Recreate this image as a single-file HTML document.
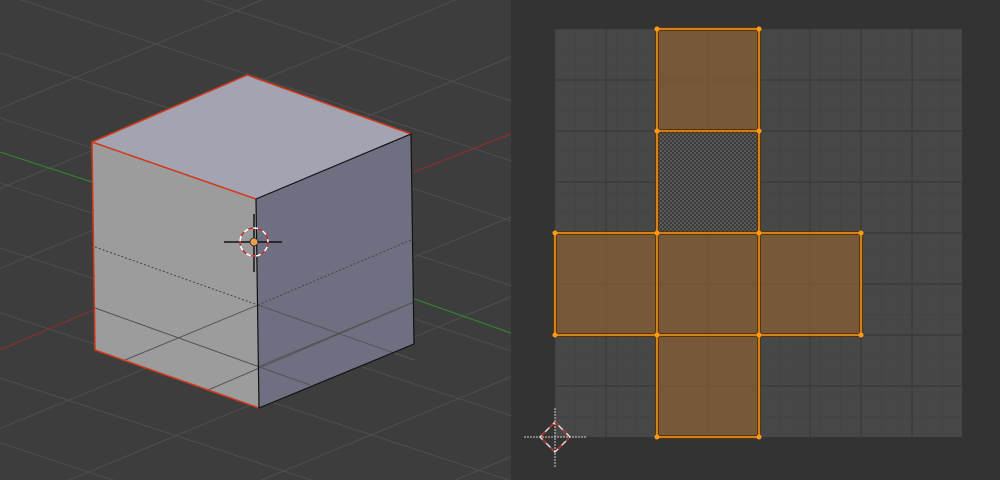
<!DOCTYPE html>
<html><head><style>
html,body{margin:0;padding:0;background:#3c3c3c;width:1000px;height:480px;overflow:hidden}
svg{display:block}
</style></head><body>
<svg width="1000" height="480" viewBox="0 0 1000 480" xmlns="http://www.w3.org/2000/svg">
<defs>
<pattern id="chk" width="4" height="4" patternUnits="userSpaceOnUse">
<rect width="4" height="4" fill="#5a5a5a"/><rect width="2" height="2" fill="#3a3a3a"/><rect x="2" y="2" width="2" height="2" fill="#3a3a3a"/>
</pattern>
<pattern id="fine" width="20.4" height="20.4" patternUnits="userSpaceOnUse" x="555" y="29">
<path d="M0 0V20.4M0 0H20.4" stroke="#3e3e3e" stroke-width="0.8" fill="none"/>
</pattern>
<clipPath id="lc"><rect x="0" y="0" width="511" height="480"/></clipPath>
</defs>
<rect x="0" y="0" width="511" height="480" fill="#3d3d3d"/>
<g clip-path="url(#lc)" stroke="#4e4e4e" stroke-width="1">
<line x1="-100" y1="20" x2="600" y2="250"/>
<line x1="-100" y1="-40" x2="600" y2="190"/>
<line x1="-100" y1="-100" x2="600" y2="130"/>
<line x1="-100" y1="85" x2="600" y2="315"/>
<line x1="-100" y1="150" x2="600" y2="380"/>
<line x1="-100" y1="215" x2="600" y2="445"/>
<line x1="-100" y1="280" x2="600" y2="510"/>
<line x1="-100" y1="345" x2="600" y2="575"/>
<line x1="-100" y1="410" x2="600" y2="640"/>
<line x1="-100" y1="475" x2="600" y2="705"/>
<line x1="-100" y1="150" x2="600" y2="-140"/>
<line x1="-100" y1="230" x2="600" y2="-60"/>
<line x1="-100" y1="310" x2="600" y2="20"/>
<line x1="-100" y1="470" x2="600" y2="180"/>
<line x1="-100" y1="550" x2="600" y2="260"/>
<line x1="-100" y1="630" x2="600" y2="340"/>
<line x1="-100" y1="710" x2="600" y2="420"/>
<line x1="-100" y1="790" x2="600" y2="500"/>
<line x1="-100" y1="870" x2="600" y2="580"/>
</g>
<line x1="0" y1="152" x2="92" y2="182" stroke="#2f8a2f" stroke-width="1"/>
<line x1="338" y1="272" x2="511" y2="333" stroke="#2f8a2f" stroke-width="1"/>
<line x1="0" y1="350" x2="175" y2="275" stroke="#9a2a2a" stroke-width="1"/>
<line x1="414" y1="172" x2="511" y2="134" stroke="#9a2a2a" stroke-width="1"/>
<polygon points="247,75 411,134 256,199 92,142" fill="#a3a3b2"/>
<polygon points="92,142 256,199 259,408 95,350" fill="#9c9c9c"/>
<polygon points="256,199 411,134 414,344 259,408" fill="#6f6f82"/>
<g stroke="#555" stroke-width="1" fill="none">
<line x1="95" y1="308" x2="310" y2="385"/>
<line x1="260" y1="366" x2="414" y2="302"/>
<line x1="125" y1="360" x2="258" y2="305"/>
<line x1="258" y1="305" x2="414" y2="360"/>
<line x1="208" y1="390" x2="414" y2="302"/>
</g>
<line x1="95" y1="247" x2="258" y2="305" stroke="#444" stroke-dasharray="2,2"/>
<line x1="258" y1="305" x2="411" y2="240" stroke="#444" stroke-dasharray="2,2"/>
<g stroke="#d03a1a" stroke-width="1.5" fill="none">
<polyline points="92,142 247,75 411,134"/>
<polyline points="92,142 256,199"/>
<polyline points="92,142 95,350 259,408"/>
</g>
<g stroke="#111" stroke-width="1.2" fill="none">
<polyline points="256,199 411,134 414,344 259,408 256,199"/>
</g>
<g>
<line x1="224" y1="242" x2="282" y2="242" stroke="#111" stroke-width="1.5"/>
<line x1="254" y1="214" x2="254" y2="272" stroke="#111" stroke-width="1.5"/>
<circle cx="254" cy="242" r="14" fill="none" stroke="#fff" stroke-width="1.5"/>
<circle cx="254" cy="242" r="14" fill="none" stroke="#c02020" stroke-width="1.5" stroke-dasharray="5,5"/>
<circle cx="254" cy="242" r="4" fill="#e8a050" stroke="#222" stroke-width="0.8"/>
</g>
<rect x="511" y="0" width="489" height="480" fill="#333333"/>
<rect x="555" y="29" width="407" height="408" fill="#474747"/>
<rect x="555" y="29" width="407" height="408" fill="url(#fine)"/>
<g stroke="#3a3a3a" stroke-width="1.2">
<line x1="555" y1="80" x2="962" y2="80"/><line x1="555" y1="131" x2="962" y2="131"/><line x1="555" y1="182" x2="962" y2="182"/><line x1="555" y1="233" x2="962" y2="233"/><line x1="555" y1="284" x2="962" y2="284"/><line x1="555" y1="335" x2="962" y2="335"/><line x1="555" y1="386" x2="962" y2="386"/>
<line x1="606" y1="29" x2="606" y2="437"/><line x1="657" y1="29" x2="657" y2="437"/><line x1="708" y1="29" x2="708" y2="437"/><line x1="759" y1="29" x2="759" y2="437"/><line x1="810" y1="29" x2="810" y2="437"/><line x1="861" y1="29" x2="861" y2="437"/><line x1="912" y1="29" x2="912" y2="437"/>
</g>
<rect x="657" y="131" width="102" height="102" fill="url(#chk)"/>
<g fill="#7a5a38" fill-opacity="0.95">
<rect x="657" y="29" width="102" height="102"/>
<rect x="555" y="233" width="306" height="102"/>
<rect x="657" y="335" width="102" height="102"/>
</g>
<g stroke="#6e4e2e" stroke-width="0.8" opacity="0.6">
<line x1="708" y1="29" x2="708" y2="131"/><line x1="657" y1="80" x2="759" y2="80"/>
<line x1="606" y1="233" x2="606" y2="335"/><line x1="708" y1="233" x2="708" y2="437"/><line x1="810" y1="233" x2="810" y2="335"/>
<line x1="555" y1="284" x2="861" y2="284"/><line x1="657" y1="386" x2="759" y2="386"/>
</g>
<g stroke="#5a3408" stroke-width="4" fill="none">
<rect x="657" y="29" width="102" height="408"/>
<rect x="555" y="233" width="306" height="102"/>
<line x1="657" y1="131" x2="759" y2="131"/>
</g>
<g stroke="#e08a1a" stroke-width="1.8" fill="none">
<rect x="657" y="29" width="102" height="408"/>
<rect x="555" y="233" width="306" height="102"/>
<line x1="657" y1="131" x2="759" y2="131"/>
</g>
<g fill="#ff9a1a">
<circle cx="657" cy="29" r="2.5"/><circle cx="759" cy="29" r="2.5"/>
<circle cx="657" cy="131" r="2.5"/><circle cx="759" cy="131" r="2.5"/>
<circle cx="555" cy="233" r="2.5"/><circle cx="657" cy="233" r="2.5"/><circle cx="759" cy="233" r="2.5"/><circle cx="861" cy="233" r="2.5"/>
<circle cx="555" cy="335" r="2.5"/><circle cx="657" cy="335" r="2.5"/><circle cx="759" cy="335" r="2.5"/><circle cx="861" cy="335" r="2.5"/>
<circle cx="657" cy="437" r="2.5"/><circle cx="759" cy="437" r="2.5"/>
</g>
<g stroke="#ccc" stroke-width="1" fill="none">
<line x1="524" y1="437" x2="586" y2="437" stroke-dasharray="2,1"/>
<line x1="555" y1="408" x2="555" y2="467" stroke-dasharray="2,1"/>
<polygon points="555,422 570,437 555,452 540,437" stroke="#ddd" stroke-width="1.5"/>
<polygon points="555,422 570,437 555,452 540,437" stroke="#c02020" stroke-width="1.5" stroke-dasharray="5,6"/>
</g>
</svg>
</body></html>
